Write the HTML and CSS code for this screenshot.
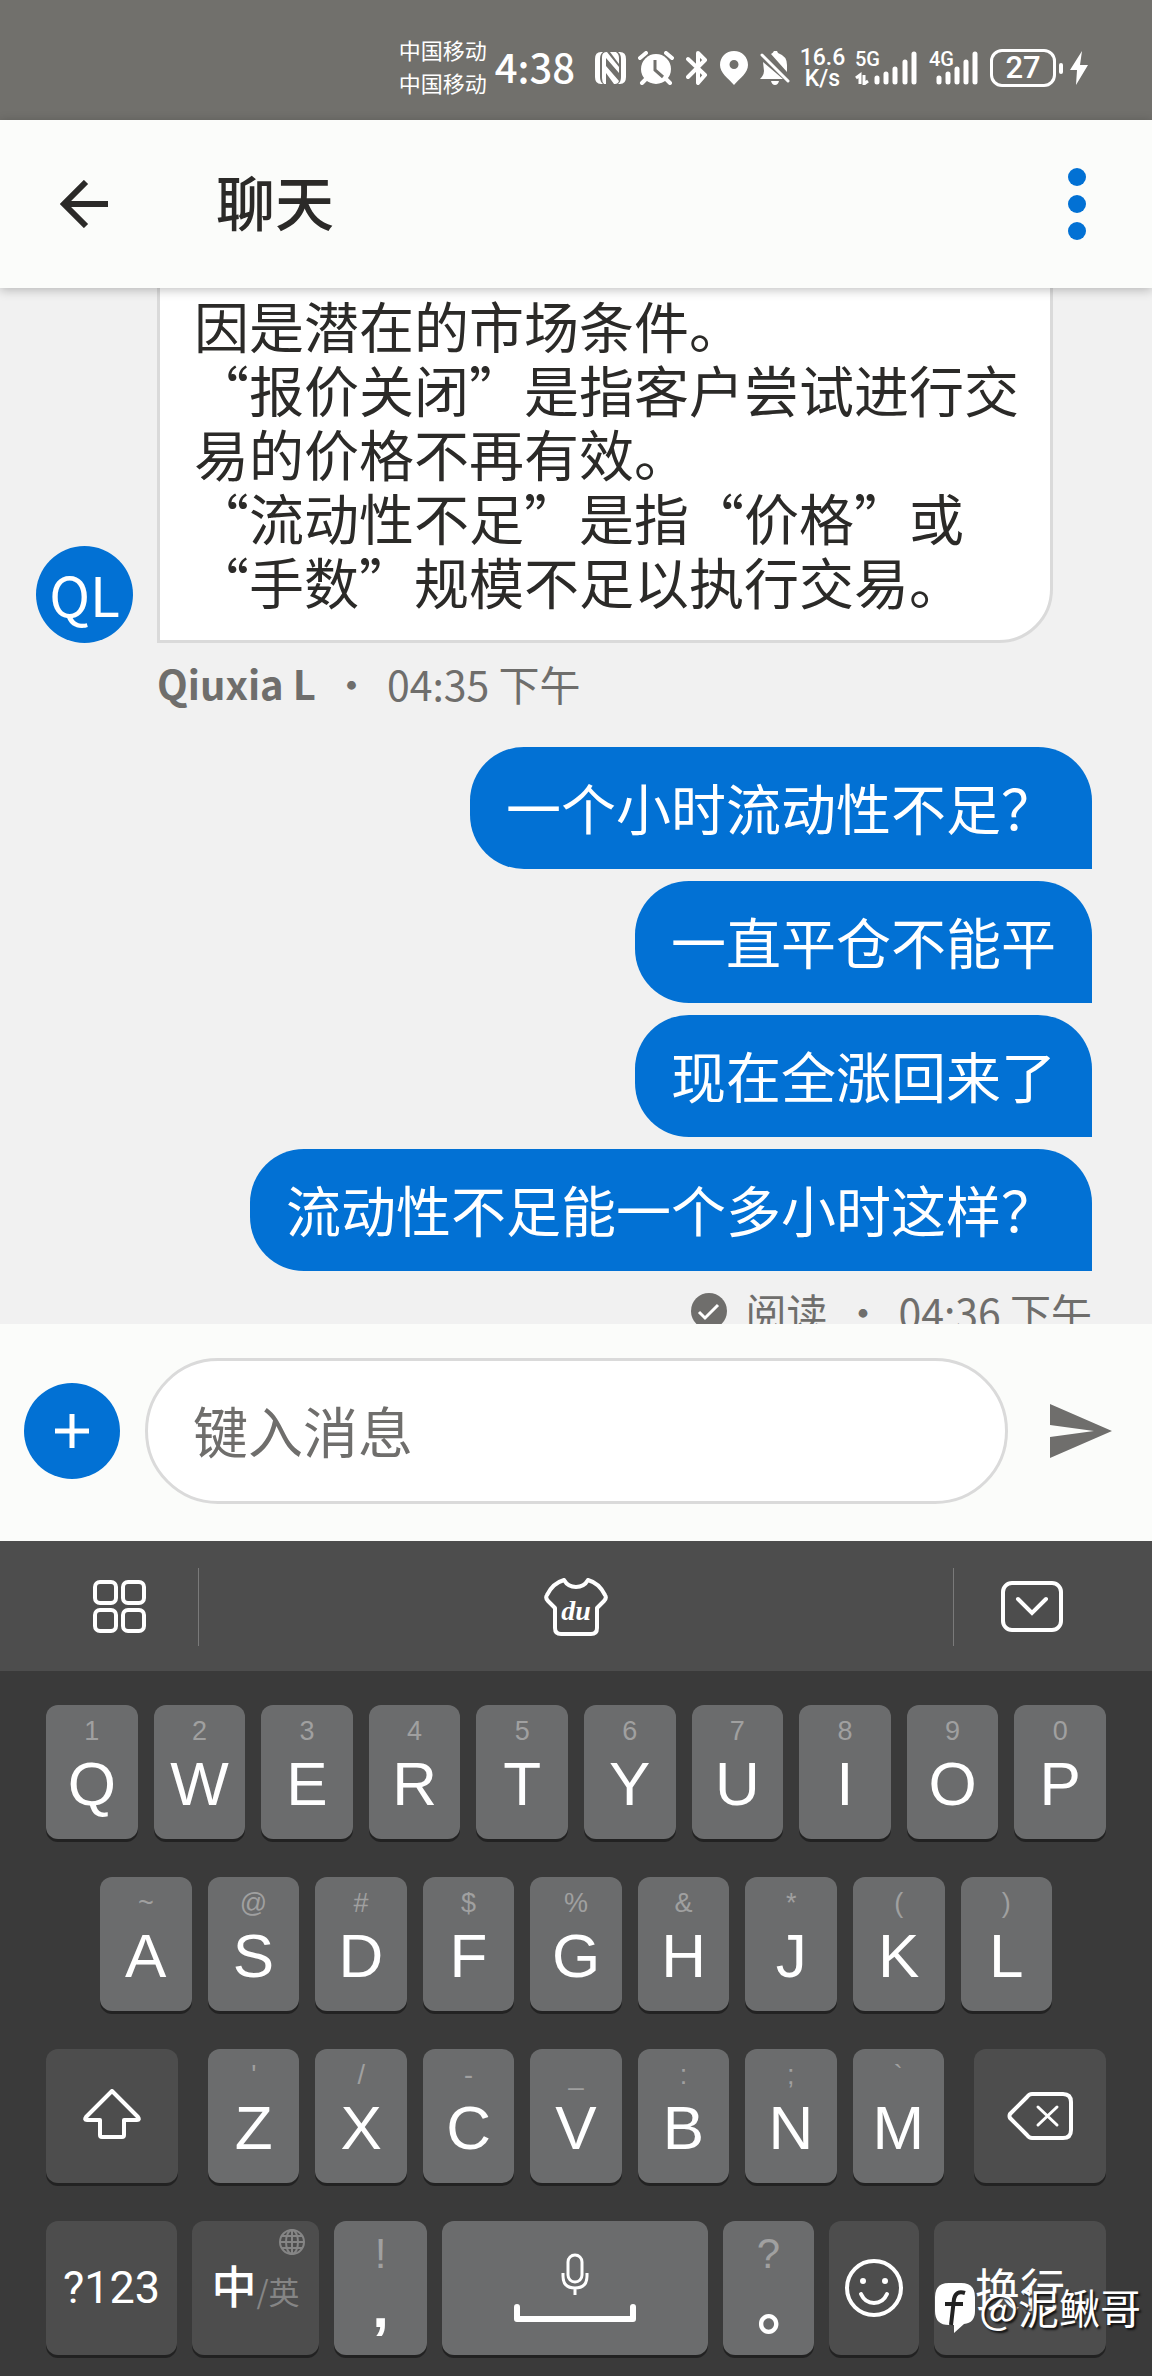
FILE: index.html
```html
<!DOCTYPE html>
<html lang="zh-CN">
<head>
    <meta charset="UTF-8">
    <meta name="viewport" content="width=device-width, initial-scale=1.0">
    <title>聊天</title>
    <link rel="stylesheet" href="styles.css">
</head>
<body>
    <div class="status-bar">
        <div class="carriers">
            <span>中国移动</span>
            <span>中国移动</span>
        </div>
        <span class="clock">4:38</span>
        <div class="status-icons">
            <svg width="31" height="34" viewBox="0 0 31 34">
                <path fill="#fff" d="M8 1H6Q0 1 0 8v18q0 7 6 7h2q-3-2-3-7V8q0-5 3-7zM23 33h2q6 0 6-7V8q0-7-6-7h-2q3 2 3 7v18q0 5-3 7z"/>
                <path fill="#fff" d="M7 6q0-5 5-5l12 15v6L11 7v8l13 15q-1 3-4 3h-1L11 22v11H9q-2-2-2-6z"/>
                <path fill="#fff" d="M15 1h6q3 2 3 6v6z"/>
            </svg>
            <svg width="36" height="34" viewBox="0 0 36 34">
                <circle cx="18" cy="18" r="15" fill="#fff"/>
                <path d="M2 7l6-5M34 7l-6-5M8 28l-4 4M28 28l4 4" stroke="#fff" stroke-width="4" stroke-linecap="round"/>
                <path d="M17 9v10l8 7" fill="none" stroke="#71706c" stroke-width="3"/>
            </svg>
            <svg width="22" height="34" viewBox="0 0 22 34">
                <path d="M2 8l17 16-7 8V2l7 7L2 26" fill="none" stroke="#fff" stroke-width="4" stroke-linejoin="round" stroke-linecap="round"/>
            </svg>
            <svg width="28" height="34" viewBox="0 0 28 34">
                <path fill="#fff" fill-rule="evenodd" d="M14 0C6 0 0 6 0 14c0 8 8 13 14 20 6-7 14-12 14-20C28 6 22 0 14 0zm0 9a4 4 0 1 1 0 9 4 4 0 0 1 0-9z"/>
            </svg>
            <svg width="30" height="34" viewBox="0 0 30 34">
                <path fill="#fff" d="M11 3q2-1 3-3h3l1 2q9 3 9 12v7zM3 11l20 17H0q4-4 4-8zM11 30h8q-1 4-4 4t-4-4z"/>
                <path d="M2 4l26 26" stroke="#fff" stroke-width="3" stroke-linecap="round"/>
            </svg>
            <div class="speed">
                <span>16.6</span>
                <span>K/s</span>
            </div>
            <div class="signal">
                <span>5G</span>
                <svg width="62" height="34" viewBox="0 0 62 34">
                    <path d="M22 27v4M31 23v8M40 18v13M50 11v20M59 3v28" stroke="#fff" stroke-width="5" stroke-linecap="round"/>
                    <path d="M1 27l4-3v9M9 24v9l4-3" fill="none" stroke="#fff" stroke-width="3"/>
                </svg>
            </div>
            <div class="signal">
                <span>4G</span>
                <svg width="49" height="34" viewBox="0 0 49 34">
                    <path d="M10 27v4M19 23v8M28 18v13M37 11v20M46 3v28" stroke="#fff" stroke-width="5" stroke-linecap="round"/>
                </svg>
            </div>
            <div class="battery">
                <span class="battery-level">27</span>
                <span class="battery-tip"></span>
                <svg width="18" height="34" viewBox="0 0 18 34">
                    <path fill="#fff" d="M12 0L0 19h7L6 34l12-20h-8z"/>
                </svg>
            </div>
        </div>
    </div>

    <header class="header">
        <button class="icon-btn" aria-label="返回">
            <svg width="48" height="48" viewBox="0 0 48 48">
                <path d="M26 2L4 24l22 22M4 24h44" fill="none" stroke="#2b2a28" stroke-width="6"/>
            </svg>
        </button>
        <h1>聊天</h1>
        <button class="icon-btn" aria-label="更多">
            <svg width="18" height="72" viewBox="0 0 18 72">
                <circle cx="9" cy="9" r="9" fill="#0271d4"/>
                <circle cx="9" cy="36" r="9" fill="#0271d4"/>
                <circle cx="9" cy="63" r="9" fill="#0271d4"/>
            </svg>
        </button>
    </header>

    <main class="chat">
        <div class="received">
            <div class="avatar">QL</div>
            <div class="bubble-in">因是潜在的市场条件。<br>“报价关闭”是指客户尝试进行交易的价格不再有效。<br>“流动性不足”是指“价格”或“手数”规模不足以执行交易。</div>
        </div>
        <p class="meta meta-in"><b>Qiuxia L</b><span>•</span><span>04:35 下午</span></p>

        <div class="sent">
            <div class="bubble-out">一个小时流动性不足？</div>
            <div class="bubble-out">一直平仓不能平</div>
            <div class="bubble-out">现在全涨回来了</div>
            <div class="bubble-out">流动性不足能一个多小时这样？</div>
        </div>
        <p class="meta meta-out">
            <svg width="36" height="36" viewBox="0 0 36 36">
                <circle cx="18" cy="18" r="18" fill="#6f6e6c"/>
                <path d="M8 19l6 6 13-13" fill="none" stroke="#fff" stroke-width="3"/>
            </svg>
            <span>阅读</span><span>•</span><span>04:36 下午</span>
        </p>
    </main>

    <form class="composer">
        <button type="button" class="add-btn" aria-label="添加">
            <svg width="34" height="34" viewBox="0 0 34 34">
                <path d="M17 0v34M0 17h34" stroke="#fff" stroke-width="5"/>
            </svg>
        </button>
        <input type="text" class="message" placeholder="键入消息" aria-label="键入消息">
        <button type="button" class="icon-btn" aria-label="发送">
            <svg width="62" height="54" viewBox="0 0 62 54">
                <path fill="#6f6e6c" d="M0 0l62 27L0 54V33l44-6L0 21z"/>
            </svg>
        </button>
    </form>

    <div class="toolbar">
        <button class="tool tool-side" aria-label="菜单">
            <svg width="54" height="54" viewBox="0 0 54 54" fill="none" stroke="#fff" stroke-width="4">
                <rect x="2" y="2" width="21" height="21" rx="5"/>
                <rect x="30" y="2" width="21" height="21" rx="5"/>
                <rect x="2" y="30" width="21" height="21" rx="5"/>
                <rect x="30" y="30" width="21" height="21" rx="5"/>
            </svg>
        </button>
        <button class="tool tool-main" aria-label="皮肤">
            <svg width="64" height="58" viewBox="0 0 64 58">
                <path d="M20 2q4 7 12 7t12-7q11 3 17 15 2 3-1 6l-7 7v20q0 6-6 6H17q-6 0-6-6V30l-7-7q-3-3-1-6Q9 5 20 2z" fill="none" stroke="#fff" stroke-width="4" stroke-linejoin="round"/>
                <text x="32" y="42" class="du">du</text>
            </svg>
        </button>
        <button class="tool tool-side" aria-label="收起键盘">
            <svg width="62" height="52" viewBox="0 0 62 52" fill="none" stroke="#fff" stroke-width="4">
                <rect x="2" y="2" width="58" height="47" rx="9"/>
                <path d="M17 18l14 14 14-14" stroke-linecap="round"/>
            </svg>
        </button>
    </div>

    <div class="keyboard">
        <div class="row">
            <button class="key"><small>1</small>Q</button>
            <button class="key"><small>2</small>W</button>
            <button class="key"><small>3</small>E</button>
            <button class="key"><small>4</small>R</button>
            <button class="key"><small>5</small>T</button>
            <button class="key"><small>6</small>Y</button>
            <button class="key"><small>7</small>U</button>
            <button class="key"><small>8</small>I</button>
            <button class="key"><small>9</small>O</button>
            <button class="key"><small>0</small>P</button>
        </div>
        <div class="row row-inset">
            <button class="key"><small>~</small>A</button>
            <button class="key"><small>@</small>S</button>
            <button class="key"><small>#</small>D</button>
            <button class="key"><small>$</small>F</button>
            <button class="key"><small>%</small>G</button>
            <button class="key"><small>&amp;</small>H</button>
            <button class="key"><small>*</small>J</button>
            <button class="key"><small>(</small>K</button>
            <button class="key"><small>)</small>L</button>
        </div>
        <div class="row row-letters">
            <button class="key key-dark" aria-label="Shift">
                <svg width="58" height="54" viewBox="0 0 58 54">
                    <path d="M29 2L3 28q-2 3 1 3h13v15q0 2 2 2h20q2 0 2-2V31h13q3 0 1-3z" fill="none" stroke="#fff" stroke-width="4" stroke-linejoin="round"/>
                </svg>
            </button>
            <div class="letters">
                <button class="key"><small>'</small>Z</button>
                <button class="key"><small>/</small>X</button>
                <button class="key"><small>-</small>C</button>
                <button class="key"><small>_</small>V</button>
                <button class="key"><small>:</small>B</button>
                <button class="key"><small>;</small>N</button>
                <button class="key"><small>`</small>M</button>
            </div>
            <button class="key key-dark" aria-label="删除">
                <svg width="66" height="48" viewBox="0 0 66 48" fill="none" stroke="#fff" stroke-width="4" stroke-linejoin="round" stroke-linecap="round">
                    <path d="M25 2h31q8 0 8 8v28q0 8-8 8H25q-3 0-5-3L3 26q-1-2 0-4L20 5q2-3 5-3z"/>
                    <path d="M31 15l19 18M50 15L31 33" stroke-width="3"/>
                </svg>
            </button>
        </div>
        <div class="row row-bottom">
            <button class="key key-dark key-num">?123</button>
            <button class="key key-dark key-lang">
                <svg class="globe" width="26" height="26" viewBox="0 0 26 26" fill="none" stroke="#858585" stroke-width="2">
                    <circle cx="13" cy="13" r="12"/>
                    <ellipse cx="13" cy="13" rx="6" ry="12"/>
                    <path d="M13 1v24M1 13h24M3 7h20M3 19h20"/>
                </svg>
                <span>中<i>/英</i></span>
            </button>
            <button class="key key-mark"><small>!</small><b>,</b></button>
            <button class="key key-space" aria-label="空格">
                <svg width="122" height="70" viewBox="0 0 122 70" fill="none" stroke="#fff">
                    <rect x="54" y="2" width="14" height="27" rx="7" stroke-width="3"/>
                    <path d="M49 20v3q0 12 12 12t12-12v-3M61 35v7" stroke-width="3"/>
                    <path d="M3 54v12h116V54" stroke-width="6" stroke-linecap="round" stroke-linejoin="round"/>
                </svg>
            </button>
            <button class="key key-mark key-stop"><small>?</small><b lang="zh-TW">。</b></button>
            <button class="key key-dark" aria-label="表情">
                <svg width="58" height="58" viewBox="0 0 58 58">
                    <circle cx="29" cy="29" r="27" fill="none" stroke="#fff" stroke-width="4"/>
                    <circle cx="18" cy="22" r="3" fill="#fff"/>
                    <circle cx="40" cy="22" r="3" fill="#fff"/>
                    <path d="M16 35q4 9 13 9t13-9" fill="none" stroke="#fff" stroke-width="4" stroke-linecap="round"/>
                </svg>
            </button>
            <button class="key key-dark key-enter">换行</button>
        </div>
        <div class="watermark">
            <svg width="40" height="50" viewBox="0 0 40 50">
                <path fill="#fff" d="M14 0h12q14 0 14 14v14q0 12-11 13l-10 9v-8h-5Q0 42 0 28V14Q0 0 14 0z"/>
                <path d="M30 10q-9-3-11 6l-3 26M10 21h18" fill="none" stroke="#222" stroke-width="4"/>
            </svg>
            <span>@泥鳅哥</span>
        </div>
    </div>
</body>
</html>
```

FILE: styles.css
```css
* {
    box-sizing: border-box;
}

body {
    margin: 0;
    min-height: 100vh;
    display: flex;
    flex-direction: column;
    font-family: "Noto Sans CJK SC", sans-serif;
    background-color: #f1f1f1;
    color: #2b2a28;
}

button {
    border: none;
    padding: 0;
    background: none;
    font-family: inherit;
    cursor: pointer;
}

svg {
    display: block;
    flex: none;
}

/* status bar */
.status-bar {
    height: 120px;
    padding: 16px 64px 0 0;
    display: flex;
    justify-content: flex-end;
    align-items: center;
    background-color: #71706c;
    color: #fff;
}

.carriers {
    display: flex;
    flex-direction: column;
    padding-bottom: 4px;
    font-size: 22px;
    line-height: 33px;
    margin-right: 8px;
}

.clock {
    padding-bottom: 4px;
    font-size: 40px;
    line-height: 48px;
    font-weight: 500;
    margin-right: 20px;
}

.status-icons {
    display: flex;
    align-items: center;
    gap: 12px;
}

.speed {
    width: 41px;
    display: flex;
    flex-direction: column;
    align-items: center;
    font-family: Roboto, sans-serif;
    font-size: 23px;
    font-weight: 500;
    line-height: 21px;
}

.signal {
    position: relative;
}

.signal span {
    position: absolute;
    left: 0;
    top: 0;
    font-family: Roboto, sans-serif;
    font-size: 20px;
    font-weight: 500;
    line-height: 16px;
}

.battery {
    display: flex;
    align-items: center;
}

.battery-level {
    width: 66px;
    height: 38px;
    border: 3px solid #fff;
    border-radius: 12px;
    font-family: Roboto, sans-serif;
    font-size: 31px;
    font-weight: 500;
    line-height: 32px;
    text-align: center;
}

.battery-tip {
    width: 4px;
    height: 11px;
    margin: 0 7px 0 3px;
    border-radius: 2px;
    background-color: #fff;
}

/* header */
.header {
    position: relative;
    z-index: 1;
    height: 168px;
    padding: 0 66px 0 60px;
    display: flex;
    align-items: center;
    background-color: #fbfcfa;
    box-shadow: 0 2px 10px rgba(0, 0, 0, 0.25);
}

.header h1 {
    flex: 1;
    margin: 0 0 0 108px;
    font-size: 59px;
    line-height: 64px;
    padding-bottom: 6px;
    font-weight: 500;
}

/* chat */
.chat {
    flex: 1 0 0;
    overflow: hidden;
}

/* first message is scrolled partly under the header */
.received {
    display: flex;
    align-items: flex-end;
    gap: 24px;
    margin: -29px 99px 0 36px;
}

.avatar {
    flex: none;
    width: 97px;
    height: 97px;
    border-radius: 50%;
    background-color: #0271d4;
    color: #fff;
    font-size: 55px;
    line-height: 95px;
    text-align: center;
}

.bubble-in {
    flex: 1;
    padding: 30px 30px 28px 34px;
    border: 3px solid #dadada;
    border-radius: 0 0 54px 0;
    background-color: #fff;
    font-size: 55px;
    line-height: 64px;
}

.meta {
    display: flex;
    align-items: center;
    margin: 10px 60px 0 157px;
    font-size: 41px;
    line-height: 60px;
    color: #6f6e6c;
}

.meta span + span,
.meta b + span {
    margin-left: 15px;
}

.meta b {
    font-size: 40px;
}

.meta-in {
    margin-bottom: 34px;
}

.meta-out {
    justify-content: flex-end;
}

.meta-out svg {
    margin-right: 18px;
}

.sent {
    display: flex;
    flex-direction: column;
    align-items: flex-end;
    gap: 12px;
    margin-right: 60px;
}

.bubble-out {
    padding: 27px 36px 31px;
    border-radius: 54px 54px 0 54px;
    background-color: #0271d4;
    color: #fff;
    font-size: 55px;
    line-height: 64px;
}

/* message box */
.composer {
    display: flex;
    align-items: center;
    height: 217px;
    padding: 0 40px 3px 24px;
    background-color: #fbfcfa;
}

.add-btn {
    flex: none;
    width: 96px;
    height: 96px;
    display: flex;
    align-items: center;
    justify-content: center;
    border-radius: 50%;
    background-color: #0271d4;
}

.message {
    flex: 1;
    min-width: 0;
    height: 146px;
    margin: 0 42px 0 25px;
    padding: 0 45px 4px;
    border: 3px solid #dadada;
    border-radius: 73px;
    background-color: #fff;
    font-family: inherit;
    font-size: 55px;
}

.message::placeholder {
    color: #6f6e6c;
    opacity: 1;
}

/* keyboard */
.toolbar {
    display: flex;
    align-items: center;
    height: 130px;
    padding-top: 2px;
    background-color: #4d4d4d;
}

.tool {
    height: 78px;
    display: flex;
    align-items: center;
    justify-content: center;
}

.tool-side {
    width: 199px;
    padding-left: 42px;
    border-right: 1px solid #7a7a7a;
}

.tool-main {
    flex: 1;
}

.tool-side:last-child {
    padding: 0 42px 0 0;
    border-right: none;
    border-left: 1px solid #7a7a7a;
}

.du {
    font-family: "Liberation Serif", serif;
    font-size: 28px;
    font-style: italic;
    font-weight: bold;
    fill: #fff;
    text-anchor: middle;
}

.keyboard {
    position: relative;
    display: flex;
    flex-direction: column;
    gap: 38px;
    padding: 34px 46px 21px;
    background-color: #3a3a3a;
}

.row,
.letters {
    display: flex;
    gap: 16px;
}

.row-inset {
    padding: 0 54px;
}

.row-letters {
    gap: 30px;
}

.letters {
    flex: 1;
}

.key {
    flex: 1 1 0;
    min-width: 0;
    height: 134px;
    padding: 12px 0 24px;
    display: flex;
    flex-direction: column;
    align-items: center;
    border-radius: 12px;
    background-color: #6b6c6d;
    box-shadow: 0 3px 0 #222;
    color: #fff;
    font-family: "Liberation Sans", sans-serif;
    font-size: 62px;
    line-height: 62px;
}

.key small {
    margin-bottom: 8px;
    color: #a0a0a0;
    font-size: 27px;
    line-height: 28px;
}

.key-dark {
    padding: 0;
    justify-content: center;
    background-color: #4d4d4d;
}

.row-letters > .key-dark {
    flex: none;
    width: 132px;
}

.row-bottom {
    display: grid;
    grid-template-columns: 131fr 127fr 93fr 266fr 91fr 90fr 172fr;
    gap: 15px;
}

.key-num {
    font-family: Roboto, sans-serif;
    font-size: 45px;
}

.key-lang,
.key-enter {
    font-family: "Noto Sans CJK SC", sans-serif;
    font-size: 45px;
}

.key-lang {
    position: relative;
    font-weight: 500;
}

.key-lang i {
    color: #858585;
    font-size: 31px;
    font-style: normal;
    font-weight: 400;
}

.globe {
    position: absolute;
    top: 8px;
    right: 14px;
}

.key-mark small {
    margin-bottom: 0;
    font-size: 42px;
    line-height: 42px;
}

.key-mark b {
    font-size: 60px;
    line-height: 64px;
}

.key-stop b {
    font-family: "Noto Sans CJK TC", sans-serif;
    line-height: 92px;
}

.key-space {
    padding: 0;
    justify-content: center;
}

.watermark {
    position: absolute;
    right: 11px;
    bottom: 36px;
    display: flex;
    align-items: center;
    gap: 4px;
    color: #fff;
    font-size: 41px;
    line-height: 60px;
    text-shadow: 2px 2px 2px #111;
}

.watermark span {
    padding-bottom: 4px;
}
```
